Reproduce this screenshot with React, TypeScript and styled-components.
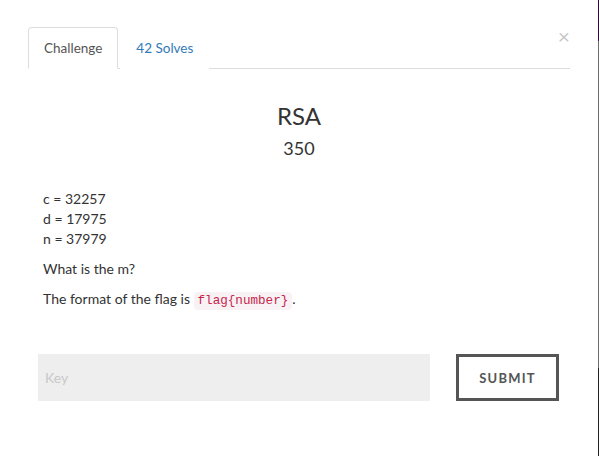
import React from 'react';
import styled, { createGlobalStyle } from 'styled-components';

const GlobalStyle = createGlobalStyle`
  html, body {
    margin: 0;
    padding: 0;
    background: #fff;
  }
  body {
    font-family: Lato, "Open Sans", "Liberation Sans", sans-serif;
    color: #333;
  }
`;

const Page = styled.div`
  display: flex;
  width: 599px;
  height: 456px;
  overflow: hidden;
`;

const Modal = styled.div`
  position: relative;
  width: 598px;
  box-sizing: border-box;
  padding: 27px 28px 0 28px;
  background: #fff;
`;

const Backdrop = styled.div`
  width: 1px;
  background: linear-gradient(
    to bottom,
    #2e0b3a 0px,
    #2e0b3a 41px,
    #6e6e6e 41px,
    #6e6e6e 368px,
    #232323 368px
  );
`;

const CloseBtn = styled.button`
  position: absolute;
  top: 26px;
  right: 28px;
  padding: 0;
  border: none;
  background: none;
  font-family: "Liberation Sans", Arial, sans-serif;
  font-size: 21px;
  font-weight: 400;
  line-height: 1;
  color: #000;
  opacity: 0.22;
  cursor: pointer;
`;

const Tabs = styled.ul`
  display: flex;
  margin: 0;
  padding: 0;
  list-style: none;
  border-bottom: 1px solid #ddd;
`;

const Tab = styled.li<{ $active?: boolean }>`
  margin-right: 2px;
  margin-bottom: -1px;
  padding: 10px 15px;
  font-size: 13.5px;
  line-height: 20px;
  border: 1px solid ${({ $active }) => ($active ? '#ddd' : 'transparent')};
  border-bottom-color: ${({ $active }) => ($active ? '#fff' : 'transparent')};
  border-radius: 4px 4px 0 0;
  background: #fff;
  color: ${({ $active }) => ($active ? '#555' : '#337ab7')};
  cursor: pointer;
`;

const Header = styled.div`
  display: flex;
  flex-direction: column;
  align-items: center;
  margin-top: 33px;
`;

const Name = styled.h3`
  margin: 0;
  font-size: 24px;
  font-weight: 400;
  line-height: 28px;
  color: #333;
`;

const Points = styled.h4`
  margin: 7px 0 0;
  font-size: 18px;
  font-weight: 400;
  line-height: 22px;
  color: #333;
`;

const Description = styled.div`
  margin-top: 30px;
  padding: 0 15px;
  font-size: 14px;
  line-height: 20px;
  color: #333;
`;

const Para = styled.p`
  margin: 0 0 10px;
`;

const Code = styled.code`
  padding: 2px 4px;
  font-family: "Liberation Mono", "DejaVu Sans Mono", monospace;
  font-size: 12.6px;
  color: #c7254e;
  background: #f9f2f4;
  border-radius: 4px;
`;

const SubmitRow = styled.form`
  display: flex;
  align-items: stretch;
  margin-top: 43px;
  padding: 0 11px 0 10px;
  gap: 26px;
`;

const KeyInput = styled.input`
  width: 392px;
  height: 47px;
  box-sizing: border-box;
  padding: 0 7px;
  border: none;
  outline: none;
  background: #eee;
  font-family: Lato, "Open Sans", sans-serif;
  font-size: 14px;
  color: #555;

  &::placeholder {
    color: #c8c8c8;
  }
`;

const SubmitBtn = styled.button`
  width: 103px;
  height: 47px;
  box-sizing: border-box;
  border: 3px solid #555;
  background: #fff;
  font-family: Lato, "Open Sans", sans-serif;
  font-size: 13px;
  font-weight: 700;
  letter-spacing: 1.2px;
  color: #555;
  cursor: pointer;
`;

const App: React.FC = () => (
  <>
    <GlobalStyle />
    <Page>
      <Modal>
        <CloseBtn type="button">×</CloseBtn>
        <Tabs>
          <Tab $active>Challenge</Tab>
          <Tab>42 Solves</Tab>
        </Tabs>
        <Header>
          <Name>RSA</Name>
          <Points>350</Points>
        </Header>
        <Description>
          <Para>
            c = 32257
            <br />
            d = 17975
            <br />
            n = 37979
          </Para>
          <Para>What is the m?</Para>
          <Para>
            The format of the flag is <Code>flag{'{number}'}</Code>.
          </Para>
        </Description>
        <SubmitRow onSubmit={(e) => e.preventDefault()}>
          <KeyInput placeholder="Key" />
          <SubmitBtn type="submit">SUBMIT</SubmitBtn>
        </SubmitRow>
      </Modal>
      <Backdrop />
    </Page>
  </>
);

export default App;
